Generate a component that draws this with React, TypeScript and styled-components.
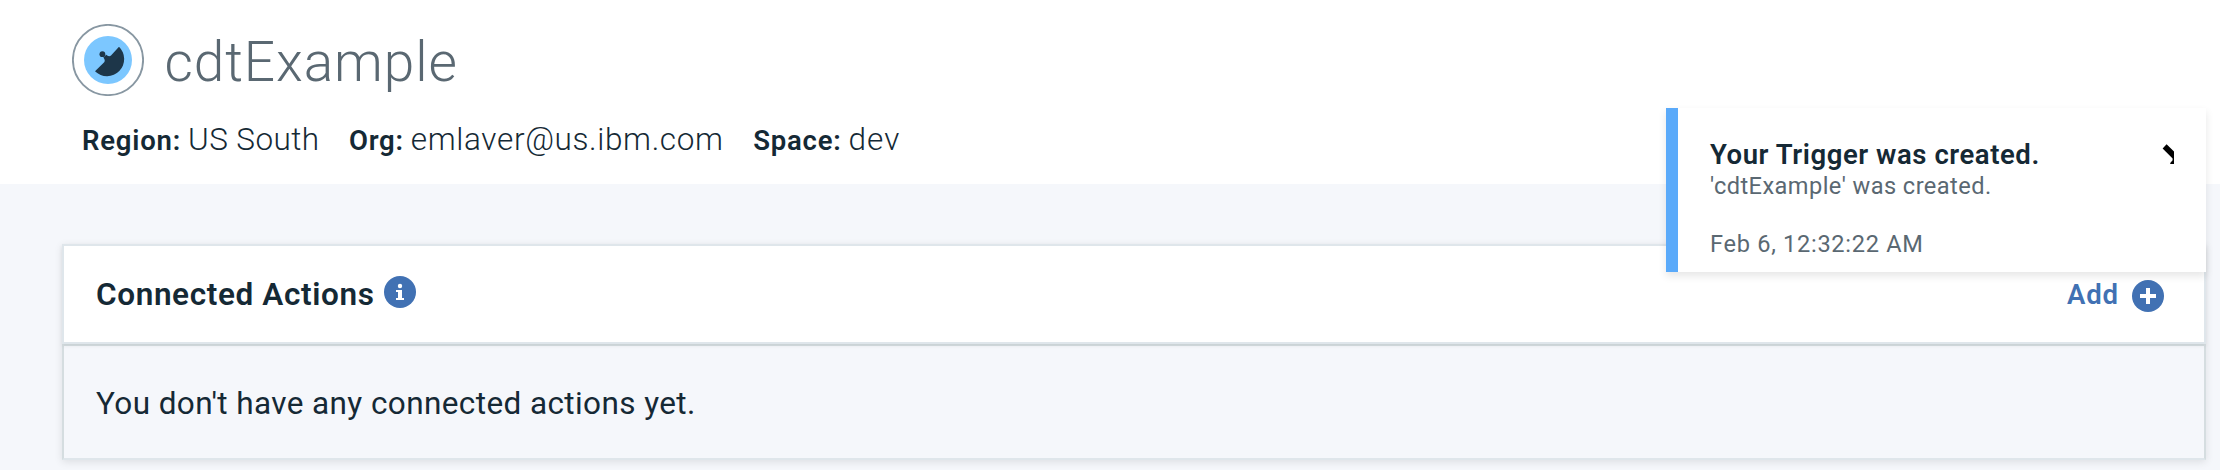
import React from 'react';
import styled, { createGlobalStyle } from 'styled-components';

const GlobalStyle = createGlobalStyle`
  * { box-sizing: border-box; }
  body {
    margin: 0;
    background: #f5f7fb;
    color: #152935;
    font-family: Roboto, "Liberation Sans", sans-serif;
    overflow: hidden;
  }
  svg { display: block; flex: none; }
`;

const Page = styled.div`
  position: relative;
  height: 470px;
  overflow: hidden;
`;

const Header = styled.header`
  height: 184px;
  padding: 24px 72px 0;
  background: #fff;
`;

const TitleRow = styled.div`
  display: flex;
  align-items: center;
  height: 72px;
  gap: 20.5px;
`;

const Title = styled.h1`
  margin: 0;
  padding-top: 4px;
  font-size: 55px;
  font-weight: 300;
  line-height: 68px;
  letter-spacing: 0.9px;
  color: #5a6872;
`;

const MetaRow = styled.dl`
  display: flex;
  margin: 23px 0 0 10px;
  gap: 29.5px;
  line-height: 42px;
`;

const MetaItem = styled.div`
  display: flex;
  align-items: baseline;
  gap: 7px;
`;

const MetaLabel = styled.dt`
  font-size: 27.5px;
  font-weight: 600;
  letter-spacing: 0.8px;
`;

const MetaValue = styled.dd<{ $tracking: number }>`
  margin: 0;
  font-size: 31.5px;
  font-weight: 300;
  letter-spacing: ${p => p.$tracking}px;
`;

const Main = styled.main`
  padding: 60px 14px 0 62px;
`;

const Card = styled.section`
  box-shadow: 0 2px 8px rgba(0, 0, 0, 0.1);
`;

const CardHeader = styled.div`
  position: relative;
  display: flex;
  align-items: center;
  justify-content: space-between;
  height: 100px;
  padding: 0 40px 0 32px;
  background: #fff;
  border: 2px solid #dfe6eb;
  box-shadow: 0 2px 4px rgba(0, 0, 0, 0.06);
`;

const CardTitle = styled.h2`
  display: flex;
  align-items: center;
  gap: 10px;
  margin: 0;
  font-size: 31.5px;
  font-weight: 600;
  line-height: 40px;
  letter-spacing: 0.62px;

  span { padding-top: 2px; }
  svg { margin-top: -5px; }
`;

const AddButton = styled.button`
  display: flex;
  align-items: center;
  gap: 13px;
  padding: 0;
  border: 0;
  background: none;
  color: #4171b3;
  font: 600 27.5px/36px Roboto, "Liberation Sans", sans-serif;
  letter-spacing: 0.9px;

  span { padding-top: 2px; }
  svg { margin-top: 4px; }
`;

const CardBody = styled.div`
  display: flex;
  align-items: center;
  height: 116px;
  padding: 2px 32px 0;
  background: #f5f7fb;
  border: 2px solid #d5dde0;
  border-bottom-color: #dfe6eb;
  font-size: 31.5px;
  letter-spacing: 0.4px;
`;

const Toast = styled.aside`
  position: absolute;
  top: 108px;
  right: 14px;
  display: flex;
  justify-content: space-between;
  align-items: flex-start;
  width: 540px;
  height: 164px;
  padding: 28px 32px 0 32px;
  background: #fff;
  border-left: 12px solid #5aaafa;
  box-shadow: 0 4px 8px rgba(0, 0, 0, 0.1);

  > svg { margin-top: 8px; }
`;

const ToastTitle = styled.div`
  font-size: 27.5px;
  font-weight: 600;
  line-height: 37px;
  letter-spacing: 0.56px;
`;

const ToastText = styled.div<{ $top?: number; $tracking: number }>`
  margin-top: ${p => p.$top ?? 0}px;
  font-size: 23.6px;
  line-height: 27px;
  letter-spacing: ${p => p.$tracking}px;
  color: #5a6872;
`;

const TriggerIcon = () => (
  <svg width="72" height="72" viewBox="-36 -36 72 72">
    <circle r="35.1" fill="#fff" stroke="#8897a2" strokeWidth="1.9" />
    <circle r="24" fill="#7cc7ff" />
    <path d="M11 -13.3A16.6 16.6 0 1 1 -13 11.3L-3.8 2.2C-2.9 1 -3 -.6 -4.6 -2.6L-1.8 -5.2C-.2 -3.6 1.8 -3.4 3 -4.6Z" fill="#1d3649" />
    <circle cx="-5.6" cy="-5.8" r="2.9" fill="#1d3649" />
  </svg>
);

const InfoIcon = () => (
  <svg width="32" height="32" viewBox="0 0 32 32">
    <circle cx="16" cy="16" r="16" fill="#4171b3" />
    <circle cx="16" cy="10" r="2.2" fill="#fff" />
    <path d="M12 14h6v8h2v2h-8v-2h2v-6h-2z" fill="#fff" />
  </svg>
);

const PlusIcon = () => (
  <svg width="32" height="32" viewBox="0 0 32 32">
    <circle cx="16" cy="16" r="16" fill="#4171b3" />
    <path d="M14 8h4v6h6v4h-6v6h-4v-6H8v-4h6z" fill="#fff" />
  </svg>
);

const CloseIcon = () => (
  <svg width="12" height="20" viewBox="0 0 12 20">
    <path d="M4.6 .2L12 7.4V20H8.6L8 19.2L10.6 16.2V14.4L.6 4.4Z" fill="#000" />
  </svg>
);

const meta = [
  { label: 'Region:', value: 'US South', tracking: 0.4 },
  { label: 'Org:', value: 'emlaver@us.ibm.com', tracking: 0.64 },
  { label: 'Space:', value: 'dev', tracking: 1 },
];

export default function App() {
  return (
    <Page>
      <GlobalStyle />
      <Header>
        <TitleRow>
          <TriggerIcon />
          <Title>cdtExample</Title>
        </TitleRow>
        <MetaRow>
          {meta.map(m => (
            <MetaItem key={m.label}>
              <MetaLabel>{m.label}</MetaLabel>
              <MetaValue $tracking={m.tracking}>{m.value}</MetaValue>
            </MetaItem>
          ))}
        </MetaRow>
      </Header>
      <Main>
        <Card>
          <CardHeader>
            <CardTitle>
              <span>Connected Actions</span>
              <InfoIcon />
            </CardTitle>
            <AddButton type="button">
              <span>Add</span>
              <PlusIcon />
            </AddButton>
          </CardHeader>
          <CardBody>You don't have any connected actions yet.</CardBody>
        </Card>
      </Main>
      <Toast>
        <div>
          <ToastTitle>Your Trigger was created.</ToastTitle>
          <ToastText $tracking={0.44}>'cdtExample' was created.</ToastText>
          <ToastText $top={31} $tracking={0.7}>Feb 6, 12:32:22 AM</ToastText>
        </div>
        <CloseIcon />
      </Toast>
    </Page>
  );
}
